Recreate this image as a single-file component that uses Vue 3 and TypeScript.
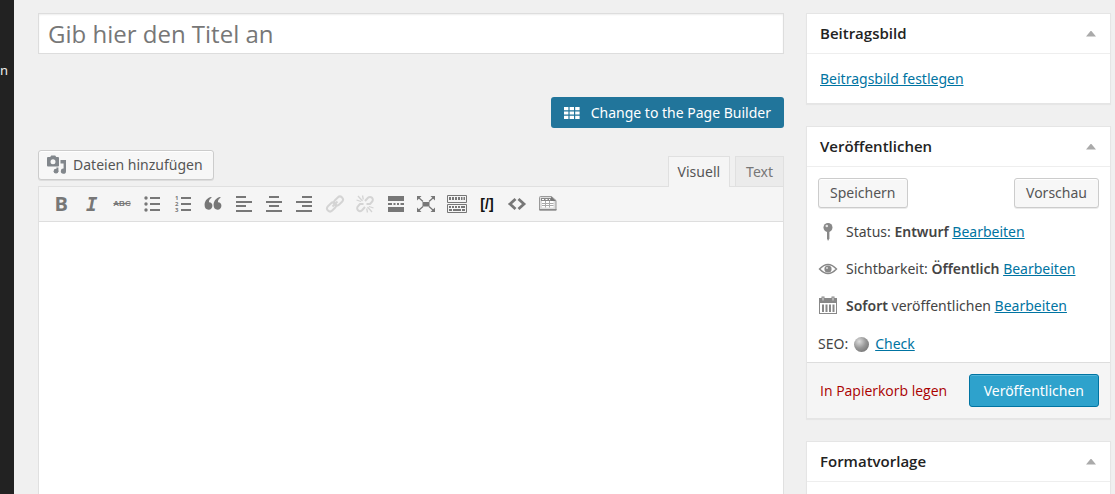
<script setup lang="ts">
import { ref } from 'vue'

type Mode = 'visual' | 'text'

interface Tool {
  id: string
  label: string
  disabled?: boolean
}

const title = ref('')
const content = ref('')
const mode = ref<Mode>('visual')

const tools: Tool[] = [
  { id: 'bold', label: 'Fett' },
  { id: 'italic', label: 'Kursiv' },
  { id: 'strike', label: 'Durchgestrichen' },
  { id: 'bullets', label: 'Aufzählung' },
  { id: 'numbers', label: 'Nummerierte Liste' },
  { id: 'quote', label: 'Zitat' },
  { id: 'left', label: 'Linksbündig' },
  { id: 'center', label: 'Zentriert' },
  { id: 'right', label: 'Rechtsbündig' },
  { id: 'link', label: 'Link einfügen', disabled: true },
  { id: 'unlink', label: 'Link entfernen', disabled: true },
  { id: 'more', label: 'Weiterlesen-Tag' },
  { id: 'expand', label: 'Vollbild' },
  { id: 'keyboard', label: 'Werkzeugleiste' },
  { id: 'shortcode', label: 'Shortcode' },
  { id: 'code', label: 'Code' },
  { id: 'table', label: 'Tabelle' },
]
</script>

<template>
  <div class="screen">
    <nav class="menu"><a href="#" class="menu-item">n</a></nav>

    <main class="main">
      <input v-model="title" class="title" type="text" placeholder="Gib hier den Titel an" aria-label="Titel" />

      <button class="builder" type="button">
        <svg width="16" height="12" viewBox="0 0 16 12" fill="#fff" aria-hidden="true">
          <path d="M0 0h4.400v3.200H0zM5.600 0H10v3.200H5.600zM11.200 0h4.400v3.200h-4.400zM0 4.400h4.400v3.200H0zM5.600 4.400H10v3.200H5.600zM11.200 4.400h4.400v3.200h-4.400zM0 8.800h4.400V12H0zM5.600 8.800H10V12H5.600zM11.200 8.800h4.400V12h-4.400z" />
        </svg>
        <span>Change to the Page Builder</span>
      </button>

      <div class="editor-head">
        <button class="btn media" type="button">
          <svg width="20" height="20" viewBox="0 0 20 20" aria-hidden="true">
            <path fill="#82878c" fill-rule="evenodd" d="M1 2h2.200l1-1.500h4L9.200 2h1.800a1 1 0 0 1 1 1v7.500a1 1 0 0 1-1 1H1a1 1 0 0 1-1-1V3a1 1 0 0 1 1-1zM6 4.200a2.500 2.500 0 1 0 0 5a2.500 2.500 0 0 0 0-5z" />
            <circle cx="9" cy="16.200" r="2.400" fill="#82878c" />
            <path fill="#82878c" d="M13.500 5H19v11.200a2.600 2.600 0 1 1-2.400-2.600V8.500h-3.100zM9.400 12.500h2v4h-2z" />
          </svg>
          <span>Dateien hinzufügen</span>
        </button>
        <div class="tabs">
          <button type="button" class="tab" :class="{ active: mode === 'visual' }" @click="mode = 'visual'">Visuell</button>
          <button type="button" class="tab" :class="{ active: mode === 'text' }" @click="mode = 'text'">Text</button>
        </div>
      </div>

      <section class="editor">
        <div class="toolbar">
          <div class="tools">
            <button
              v-for="tool in tools"
              :key="tool.id"
              type="button"
              class="tool"
              :disabled="tool.disabled"
              :aria-label="tool.label"
            >
              <span v-if="tool.id === 'bold'" class="glyph-bold">B</span>
              <span v-else-if="tool.id === 'italic'" class="glyph-italic">I</span>
              <span v-else-if="tool.id === 'strike'" class="glyph-strike">ABC</span>
              <span v-else-if="tool.id === 'shortcode'" class="glyph-shortcode">[/]</span>
              <svg v-else width="20" height="20" viewBox="0 0 20 20" fill="currentColor" aria-hidden="true">
                <template v-if="tool.id === 'bullets'">
                  <circle cx="4" cy="4" r="1.700" /><circle cx="4" cy="10" r="1.700" /><circle cx="4" cy="16" r="1.700" />
                  <path d="M8 3h10v2H8zM8 9h10v2H8zM8 15h10v2H8z" />
                </template>
                <template v-else-if="tool.id === 'numbers'">
                  <path d="M8 3h10v2H8zM8 9h10v2H8zM8 15h10v2H8z" />
                  <text x="2" y="6" class="digit">1</text>
                  <text x="2" y="12" class="digit">2</text>
                  <text x="2" y="18" class="digit">3</text>
                </template>
                <path v-else-if="tool.id === 'quote'" d="M8.900 3.600C6.800 4.700 6 6.200 5.900 8.200c2.100-.1 3.500 1.300 3.500 3.500c0 2.300-1.500 4-3.800 4C3 15.700 1.600 13.800 1.600 11C1.600 7.200 3.700 4.200 7.700 2.900zM17.900 3.600c-2.100 1.100-2.900 2.600-3 4.600c2.100-.1 3.500 1.300 3.500 3.500c0 2.300-1.500 4-3.800 4c-2.600 0-4-1.900-4-4.700c0-3.800 2.100-6.800 6.100-8.100z" />
                <path v-else-if="tool.id === 'left'" d="M2 2h10v2H2zM2 7h16v2H2zM2 11h10v2H2zM2 16h16v2H2z" />
                <path v-else-if="tool.id === 'center'" d="M5 2h10v2H5zM2 7h16v2H2zM5 11h10v2H5zM2 16h16v2H2z" />
                <path v-else-if="tool.id === 'right'" d="M8 2h10v2H8zM2 7h16v2H2zM8 11h10v2H8zM2 16h16v2H2z" />
                <g v-else-if="tool.id === 'link'" fill="none" stroke="currentColor" stroke-width="2">
                  <rect x="8.500" y="4" width="10" height="6" rx="3" transform="rotate(-45 13.500 7)" />
                  <rect x="1.500" y="10" width="10" height="6" rx="3" transform="rotate(-45 6.500 13)" />
                  <path d="M7.500 12.500l5-5" />
                </g>
                <g v-else-if="tool.id === 'unlink'" fill="none" stroke="currentColor" stroke-width="2">
                  <path d="M10 7l3-3.200a2.800 2.800 0 0 1 4 4l-2 2.200h-3.500M10 13l-3 3.200a2.800 2.800 0 0 1-4-4L5 10h3.500" />
                  <path d="M3 2l4.500 5M7.500 1.500l.8 4M1.500 6l4.500 1.500M12.500 13l4.500 5M11.700 14.500l.8 4M14 12.500l4.500 1.500" stroke-width="1.300" />
                </g>
                <path v-else-if="tool.id === 'more'" d="M2 2h16v5H2zM2 9h4v2H2zM7.500 9h2v2h-2zM11 9h2v2h-2zM14.500 9H18v2h-3.500zM2 13h16v5H2z" />
                <g v-else-if="tool.id === 'expand'">
                  <path d="M6.500 8h7v4.500h-7zM1 2h4.500L1 6.500zM19 2v4.500L14.500 2zM1 18v-4.500L5.500 18zM19 18h-4.500l4.500-4.500z" />
                  <path d="M2.500 3.500l4.500 4M17.500 3.500l-4.500 4M2.500 16.500l4.500-4M17.500 16.500l-4.500-4" stroke="currentColor" stroke-width="1.300" />
                </g>
                <g v-else-if="tool.id === 'keyboard'">
                  <path d="M.5 1.500h19v7H.5zM.5 10.500h19v8H.5z" fill="none" stroke="currentColor" />
                  <path d="M2 3h2v3H2zM5 3h2v3H5zM8 3h2v3H8zM11 3h2v3h-2zM14 3h1.500v3H14zM16.500 3H18v3h-1.500zM2 12h2v2H2zM5 12h2v2H5zM8 12h2v2H8zM11 12h2v2h-2zM14 12h4v2h-4zM2 15h3v2H2zM6 15h8v2H6zM15 15h3v2h-3z" />
                </g>
                <path v-else-if="tool.id === 'code'" d="M8.500 5L3 10l5.500 5M11.500 5l5.500 5-5.500 5" fill="none" stroke="currentColor" stroke-width="2.800" />
                <g v-else>
                  <path d="M1.500 3.500a1 1 0 0 1 1-1h11l4.500 4v9.500h-16.500z" fill="#ddd" stroke="#999" />
                  <path d="M3 4h10v3H3z" fill="#888" />
                  <path d="M4 5.500h2M7.500 5.500h2M11 5.500h1" stroke="#fff" />
                  <path d="M4 7h11.500v6.500H4z" fill="#fff" />
                  <path d="M4 9.500h11.500M4 11.500h11.500M7.500 7v6.500M11.500 7v6.500" stroke="#aaa" />
                  <path d="M13 2.500V7h5z" fill="#777" />
                  <path d="M1.500 15h17v1.500h-17z" fill="#8a8a8a" />
                </g>
              </svg>
            </button>
          </div>
        </div>
        <textarea v-model="content" class="canvas" aria-label="Inhalt"></textarea>
      </section>
    </main>

    <aside class="side">
      <section class="box">
        <header class="box-head">
          <h2>Beitragsbild</h2>
          <button type="button" class="toggle" aria-label="Beitragsbild umschalten"></button>
        </header>
        <div class="thumb"><a href="#">Beitragsbild festlegen</a></div>
      </section>

      <section class="box">
        <header class="box-head">
          <h2>Veröffentlichen</h2>
          <button type="button" class="toggle" aria-label="Veröffentlichen umschalten"></button>
        </header>
        <div class="publish">
          <div class="actions">
            <button type="button" class="btn">Speichern</button>
            <button type="button" class="btn">Vorschau</button>
          </div>
          <p class="row">
            <svg width="20" height="20" viewBox="0 0 20 20" aria-hidden="true">
              <circle cx="10" cy="5.500" r="4.500" fill="#888" />
              <circle cx="8.800" cy="4" r="1.300" fill="#e4e4e4" />
              <path d="M9 9h2.400v7.500L10 19l-1-2.500z" fill="#888" />
            </svg>
            <span>Status: <b>Entwurf</b> <a href="#">Bearbeiten</a></span>
          </p>
          <p class="row">
            <svg width="20" height="20" viewBox="0 0 20 20" aria-hidden="true">
              <path d="M1.500 10Q10 1 18.500 10Q10 19 1.500 10z" fill="none" stroke="#888" stroke-width="1.400" />
              <circle cx="10" cy="10" r="3.600" fill="#888" />
              <circle cx="9" cy="9" r="1" fill="#ddd" />
            </svg>
            <span>Sichtbarkeit: <b>Öffentlich</b> <a href="#">Bearbeiten</a></span>
          </p>
          <p class="row">
            <svg width="20" height="20" viewBox="0 0 20 20" fill="#888" aria-hidden="true">
              <path fill-rule="evenodd" d="M1 2h2.500V.5h3V2h7V.5h3V2H19v16H1zM2 7v10h16V7z" />
              <path d="M4 8.500h2V16H4zM7.500 8.500h2V16h-2zM11 8.500h2V16h-2zM14.500 8.500h2V16h-2z" />
              <path d="M4.500 1.500h1v3h-1zM14.500 1.500h1v3h-1z" fill="#ddd" />
            </svg>
            <span><b>Sofort</b> veröffentlichen <a href="#">Bearbeiten</a></span>
          </p>
          <p class="seo"><span>SEO:</span><i class="orb"></i><a href="#">Check</a></p>
        </div>
        <footer class="box-foot">
          <a href="#" class="trash">In Papierkorb legen</a>
          <button type="button" class="btn primary">Veröffentlichen</button>
        </footer>
      </section>

      <section class="box">
        <header class="box-head">
          <h2>Formatvorlage</h2>
          <button type="button" class="toggle" aria-label="Formatvorlage umschalten"></button>
        </header>
        <div class="thumb"></div>
      </section>
    </aside>
  </div>
</template>

<style>
body {
  background: #f0f0f0;
}
</style>

<style scoped>
.screen,
.screen * {
  box-sizing: border-box;
}
.screen {
  display: flex;
  height: 100vh;
  overflow: hidden;
  color: #444;
  font: 14px/20px "Noto Sans", "Open Sans", sans-serif;
}
button,
input,
textarea {
  margin: 0;
  font: inherit;
  outline: none;
}
a {
  color: #0074a2;
}
b {
  font-weight: 600;
}
.menu {
  flex: none;
  width: 14px;
  padding-top: 60px;
  background: #222;
}
.menu-item {
  color: #eee;
  font-size: 13px;
  text-decoration: none;
}
.main {
  display: flex;
  flex: 1;
  flex-direction: column;
  min-width: 0;
  padding: 13px 22px 0 24px;
}
.title {
  flex: none;
  width: 100%;
  height: 41px;
  padding: 0 9px;
  border: 1px solid #ddd;
  background: #fff;
  box-shadow: inset 0 1px 2px rgba(0, 0, 0, 0.07);
  color: #333;
  font-family: "Open Sans", sans-serif;
  font-size: 24px;
}
.title::placeholder {
  color: #777;
  opacity: 1;
}
.builder {
  display: flex;
  flex: none;
  align-items: center;
  align-self: flex-end;
  gap: 11px;
  height: 31px;
  margin-top: 43px;
  padding: 0 13px;
  border: 0;
  border-radius: 3px;
  background: #21759b;
  color: #fff;
}
.editor-head {
  display: flex;
  flex: none;
  align-items: flex-end;
  justify-content: space-between;
  margin-top: 22px;
}
.btn {
  height: 30px;
  padding: 0 11px;
  border: 1px solid #ccc;
  border-radius: 3px;
  background: #f7f7f7;
  box-shadow: inset 0 1px 0 #fff, 0 1px 0 rgba(0, 0, 0, 0.08);
  color: #555;
}
.media {
  display: flex;
  align-items: center;
  gap: 6px;
  margin-bottom: 6px;
  padding: 0 10px 0 8px;
}
.tabs {
  display: flex;
  gap: 5px;
}
.tab {
  height: 30px;
  padding: 0 10px;
  border: 1px solid #e0e0e0;
  border-bottom: 0;
  background: #ebebeb;
  color: #777;
}
.tab.active {
  position: relative;
  height: 31px;
  margin-bottom: -1px;
  padding: 0 9px 1px;
  background: #f5f5f5;
  color: #555;
}
.editor {
  display: flex;
  flex: 1;
  flex-direction: column;
  border: 1px solid #e0e0e0;
  border-bottom: 0;
  background: #fff;
}
.toolbar {
  flex: none;
  height: 35px;
  padding-left: 7px;
  border-bottom: 1px solid #dedede;
  background: #f5f5f5;
}
.tools {
  display: grid;
  grid-template-columns: repeat(17, 1fr);
  width: 100%;
  max-width: 517px;
  height: 34px;
}
.tool {
  display: flex;
  align-items: center;
  justify-content: center;
  min-width: 0;
  padding: 0;
  border: 0;
  background: none;
  color: #777;
}
.tool:disabled {
  color: #d4d4d4;
}
.glyph-bold {
  font: bold 20px/20px "Open Sans", sans-serif;
}
.glyph-italic {
  font: italic bold 19px/20px "DejaVu Sans Mono", monospace;
}
.glyph-strike {
  font: bold 8px/20px "Liberation Sans", sans-serif;
  text-decoration: line-through;
}
.glyph-shortcode {
  color: #111;
  font: bold 14px/20px "Liberation Sans", sans-serif;
}
.digit {
  font: bold 6px "Open Sans", sans-serif;
}
.canvas {
  flex: 1;
  width: 100%;
  padding: 12px;
  border: 0;
  background: #fff;
  resize: none;
}
.side {
  display: flex;
  flex: none;
  flex-direction: column;
  gap: 22px;
  width: 309px;
  padding: 13px 4px 0 0;
}
.box {
  flex: none;
  border: 1px solid #e5e5e5;
  background: #fff;
  box-shadow: 0 1px 1px rgba(0, 0, 0, 0.04);
}
.box-head {
  display: flex;
  align-items: center;
  justify-content: space-between;
  height: 40px;
  padding: 0 14px 0 13px;
  border-bottom: 1px solid #eee;
}
.box-head h2 {
  margin: 0;
  padding-bottom: 1px;
  color: #222;
  font: 600 15px/20px "Open Sans", sans-serif;
}
.toggle {
  width: 10px;
  height: 6px;
  padding: 0;
  border: 0;
  background: #aaa;
  clip-path: polygon(50% 0, 100% 100%, 0 100%);
}
.thumb {
  min-height: 49px;
  padding: 15px 13px 14px;
}
.publish {
  padding: 11px 11px 8px;
}
.actions {
  display: flex;
  justify-content: space-between;
}
.row,
.seo {
  display: flex;
  align-items: center;
  margin: 0;
}
.row {
  gap: 8px;
  height: 20px;
  margin-top: 17px;
}
.row:nth-of-type(1) {
  margin-top: 14px;
}
.seo {
  gap: 6px;
  margin-top: 18px;
}
.orb {
  width: 15px;
  height: 15px;
  border-radius: 50%;
  background: radial-gradient(circle at 35% 30%, #ddd, #999 45%, #666);
}
.box-foot {
  display: flex;
  align-items: center;
  justify-content: space-between;
  height: 56px;
  padding: 0 11px 0 13px;
  border-top: 1px solid #ddd;
  background: #f5f5f5;
}
.trash {
  color: #a00;
  font-family: "Open Sans", sans-serif;
  text-decoration: none;
}
.primary {
  height: 33px;
  padding: 0 14px;
  border-color: #0074a2;
  background: #2ea2cc;
  box-shadow: inset 0 1px 0 rgba(120, 200, 230, 0.5);
  color: #fff;
}
</style>
